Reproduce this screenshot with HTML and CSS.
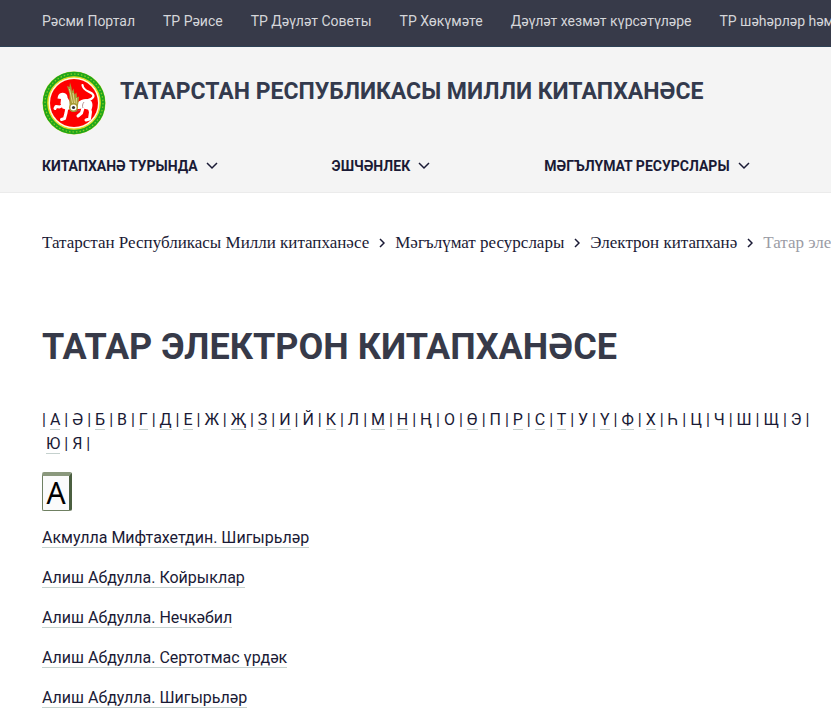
FILE: index.html
```
<!DOCTYPE html>
<html lang="tt">
<head>
  <meta charset="UTF-8">
  <meta name="viewport" content="width=device-width, initial-scale=1">
  <title>Татар электрон китапханәсе</title>
  <link rel="stylesheet" href="styles.css">
</head>
<body>
  <nav class="top-bar">
    <a href="#">Рәсми Портал</a>
    <a href="#">ТР Рәисе</a>
    <a href="#">ТР Дәүләт Советы</a>
    <a href="#">ТР Хөкүмәте</a>
    <a href="#">Дәүләт хезмәт күрсәтүләре</a>
    <a href="#">ТР шәһәрләр һәм районнары</a>
  </nav>

  <header class="header">
    <div class="brand">
      <svg class="brand-logo" viewBox="0 0 64 64" aria-hidden="true">
        <circle cx="32" cy="32" r="31.5" fill="#c6dc1c"/>
        <circle cx="32" cy="32" r="29" fill="none" stroke="#1fa51c" stroke-width="4.4"/>
        <circle cx="32" cy="32" r="29" fill="none" stroke="#8fd01a" stroke-width="1.2" stroke-dasharray="1.500 2"/>
        <circle cx="32" cy="32" r="26" fill="#fffbe0" stroke="#e8d820" stroke-width="1"/>
        <circle cx="32" cy="32" r="24" fill="#fe0000"/>
        <!-- tail -->
        <path d="M46 29c5-1 7-4 4-6.500-4-2.500-9-3-9.500-8.500" fill="none" stroke="#fff" stroke-width="2.200" stroke-linecap="round"/>
        <!-- body -->
        <path d="M16 25c1-2.500 3-3.500 5-3.300 3 .2 4.500 2.300 4.600 5l2.400 4.300 7 1c4-3.500 9-5 13-3 3 2 3 6 1.500 9.500l-2 .5-6-1.500-5 .5-6-1-5 2-5-1.500-2-5 .5-4.500-3.500-.5z" fill="#fff"/>
        <!-- legs -->
        <path d="M22 34l-4.500 2-3.500-.5-1 2M25 36l-1 6-1.500 5.500-3 1M41 37l-1.500 5-3.500 3M47 36l1.500 5-1 7-3.500 1" fill="none" stroke="#fff" stroke-width="3" stroke-linecap="round" stroke-linejoin="round"/>
        <path d="M29 40c3 1 6 .5 9-1M42 31c-1.500 2-2 4-1 6" fill="none" stroke="#9b6a6a" stroke-width=".7"/>
        <!-- wing -->
        <path d="M28 36c-1.500-7 .5-10-1-15l-2-6 2.500 1 .5-4.500 1.500 5 .5 4 1.500-3 1 6 2-2 .5 5 2-1-.5 6-1 5z" fill="#a79a35"/>
        <path d="M27.500 18l3 14M31 22l1.500 10M34.500 27l-.5 6" fill="none" stroke="#efe5a0" stroke-width=".8"/>
        <circle cx="31.500" cy="36.500" r="3.800" fill="#fff" stroke="#a79a35" stroke-width="1.500"/>
        <circle cx="31.500" cy="36.500" r="1.600" fill="#333"/>
      </svg>
      <a class="brand-name" href="#">Татарстан Республикасы Милли китапханәсе</a>
    </div>
    <nav class="menu">
      <a href="#">Китапханә турында
        <svg class="menu-arrow" viewBox="0 0 12 8" aria-hidden="true"><path d="M1 1l5 5 5-5"/></svg>
      </a>
      <a href="#">Эшчәнлек
        <svg class="menu-arrow" viewBox="0 0 12 8" aria-hidden="true"><path d="M1 1l5 5 5-5"/></svg>
      </a>
      <a href="#">Мәгълүмат ресурслары
        <svg class="menu-arrow" viewBox="0 0 12 8" aria-hidden="true"><path d="M1 1l5 5 5-5"/></svg>
      </a>
    </nav>
  </header>

  <main class="content">
    <nav class="breadcrumbs">
      <a href="#">Татарстан Республикасы Милли китапханәсе</a>
      <svg class="crumb-arrow" viewBox="0 0 6 10" aria-hidden="true"><path d="M1 1l4 4-4 4"/></svg>
      <a href="#">Мәгълүмат ресурслары</a>
      <svg class="crumb-arrow" viewBox="0 0 6 10" aria-hidden="true"><path d="M1 1l4 4-4 4"/></svg>
      <a href="#">Электрон китапханә</a>
      <svg class="crumb-arrow" viewBox="0 0 6 10" aria-hidden="true"><path d="M1 1l4 4-4 4"/></svg>
      <span class="crumb-current">Татар электрон китапханәсе</span>
    </nav>

    <h1>Татар электрон китапханәсе</h1>

    <p class="alphabet">|&nbsp;<a href="#a">А</a>&nbsp;| Ә&nbsp;| <a href="#b">Б</a>&nbsp;| В&nbsp;| <a href="#g">Г</a>&nbsp;| <a href="#d">Д</a>&nbsp;| <a href="#e">Е</a>&nbsp;| Ж&nbsp;| <a href="#zh">Җ</a>&nbsp;| <a href="#z">З</a>&nbsp;| <a href="#i">И</a>&nbsp;| Й&nbsp;| <a href="#k">К</a>&nbsp;| Л&nbsp;| <a href="#m">М</a>&nbsp;| <a href="#n">Н</a>&nbsp;| Ң&nbsp;| О&nbsp;| <a href="#oe">Ө</a>&nbsp;| П&nbsp;| <a href="#r">Р</a>&nbsp;| <a href="#s">С</a>&nbsp;| <a href="#t">Т</a>&nbsp;| У&nbsp;| <a href="#ue">Ү</a>&nbsp;| <a href="#f">Ф</a>&nbsp;| <a href="#h">Х</a>&nbsp;| Һ&nbsp;| Ц&nbsp;| Ч&nbsp;| Ш&nbsp;| Щ&nbsp;| Э&nbsp;|<wbr>&nbsp;<a href="#yu">Ю</a>&nbsp;| Я&nbsp;|</p>

    <h2 class="letter" id="a"><span class="letter-tile">А</span></h2>

    <ul class="books">
      <li><a href="#">Акмулла Мифтахетдин. Шигырьләр</a></li>
      <li><a href="#">Алиш Абдулла. Койрыклар</a></li>
      <li><a href="#">Алиш Абдулла. Нечкәбил</a></li>
      <li><a href="#">Алиш Абдулла. Сертотмас үрдәк</a></li>
      <li><a href="#">Алиш Абдулла. Шигырьләр</a></li>
    </ul>
  </main>
</body>
</html>
```
FILE: styles.css
```
* {
  box-sizing: border-box;
}

body {
  margin: 0;
  background: #fff;
  color: #1a1a35;
  font-family: Roboto, "Liberation Sans", sans-serif;
  font-size: 16px;
  line-height: 24px;
  overflow-x: hidden;
}

a {
  color: inherit;
  text-decoration: none;
}

.top-bar {
  display: flex;
  gap: 28px;
  height: 47px;
  padding: 9px 0 0 42px;
  background: #373a49;
  border-bottom: 1px solid #2d4155;
  color: #d5d6da;
  font-size: 14px;
  white-space: nowrap;
  overflow: hidden;
}

.header {
  padding: 24px 42px 14px;
  background: #f4f4f4;
  border-bottom: 1px solid #ebebeb;
}

.brand {
  display: flex;
  gap: 14px;
}

.brand-logo {
  flex: none;
  width: 64px;
  height: 64px;
}

.brand-name {
  padding-top: 9px;
  color: #333a4d;
  font-size: 23px;
  font-weight: 700;
  text-transform: uppercase;
}

.menu {
  display: flex;
  gap: 114px;
  margin-top: 19px;
  font-size: 14px;
  font-weight: 700;
  text-transform: uppercase;
  white-space: nowrap;
}

.menu a {
  display: flex;
  align-items: center;
  gap: 8px;
}

.menu-arrow {
  width: 12px;
  height: 8px;
}

.menu-arrow path,
.crumb-arrow path {
  fill: none;
  stroke: #1a1a35;
  stroke-width: 1.5;
}

.content {
  padding: 38px 21px 12px 42px;
}

.breadcrumbs {
  display: flex;
  align-items: center;
  gap: 10px;
  margin-right: -21px;
  font-family: "Roboto Slab", "Liberation Serif", serif;
  font-size: 17px;
  white-space: nowrap;
  overflow: hidden;
}

.crumb-arrow {
  flex: none;
  width: 6px;
  height: 10px;
}

.crumb-current {
  color: #9b9ca5;
}

h1 {
  margin: 70px 0 39px;
  color: #373a49;
  font-size: 36px;
  font-weight: 700;
  line-height: 44px;
  text-transform: uppercase;
}

.alphabet {
  margin: 0;
}

.alphabet a,
.books a {
  border-bottom: 1px solid #c5d1ce;
}

.letter {
  margin: 16px 0 15px;
}

.letter-tile {
  display: block;
  width: 30px;
  height: 39px;
  padding-top: 1px;
  border: 1px solid #6f8062;
  border-top: 4px solid #8a987c;
  border-right: 3px solid #4b5f40;
  border-radius: 2px;
  background: #fbfbfb;
  color: #000;
  font-family: "Noto Sans", sans-serif;
  font-size: 30px;
  font-weight: 400;
  line-height: 32px;
  text-align: center;
}

.books {
  display: grid;
  gap: 16px;
  margin: 0;
  padding: 0;
  list-style: none;
}
```
